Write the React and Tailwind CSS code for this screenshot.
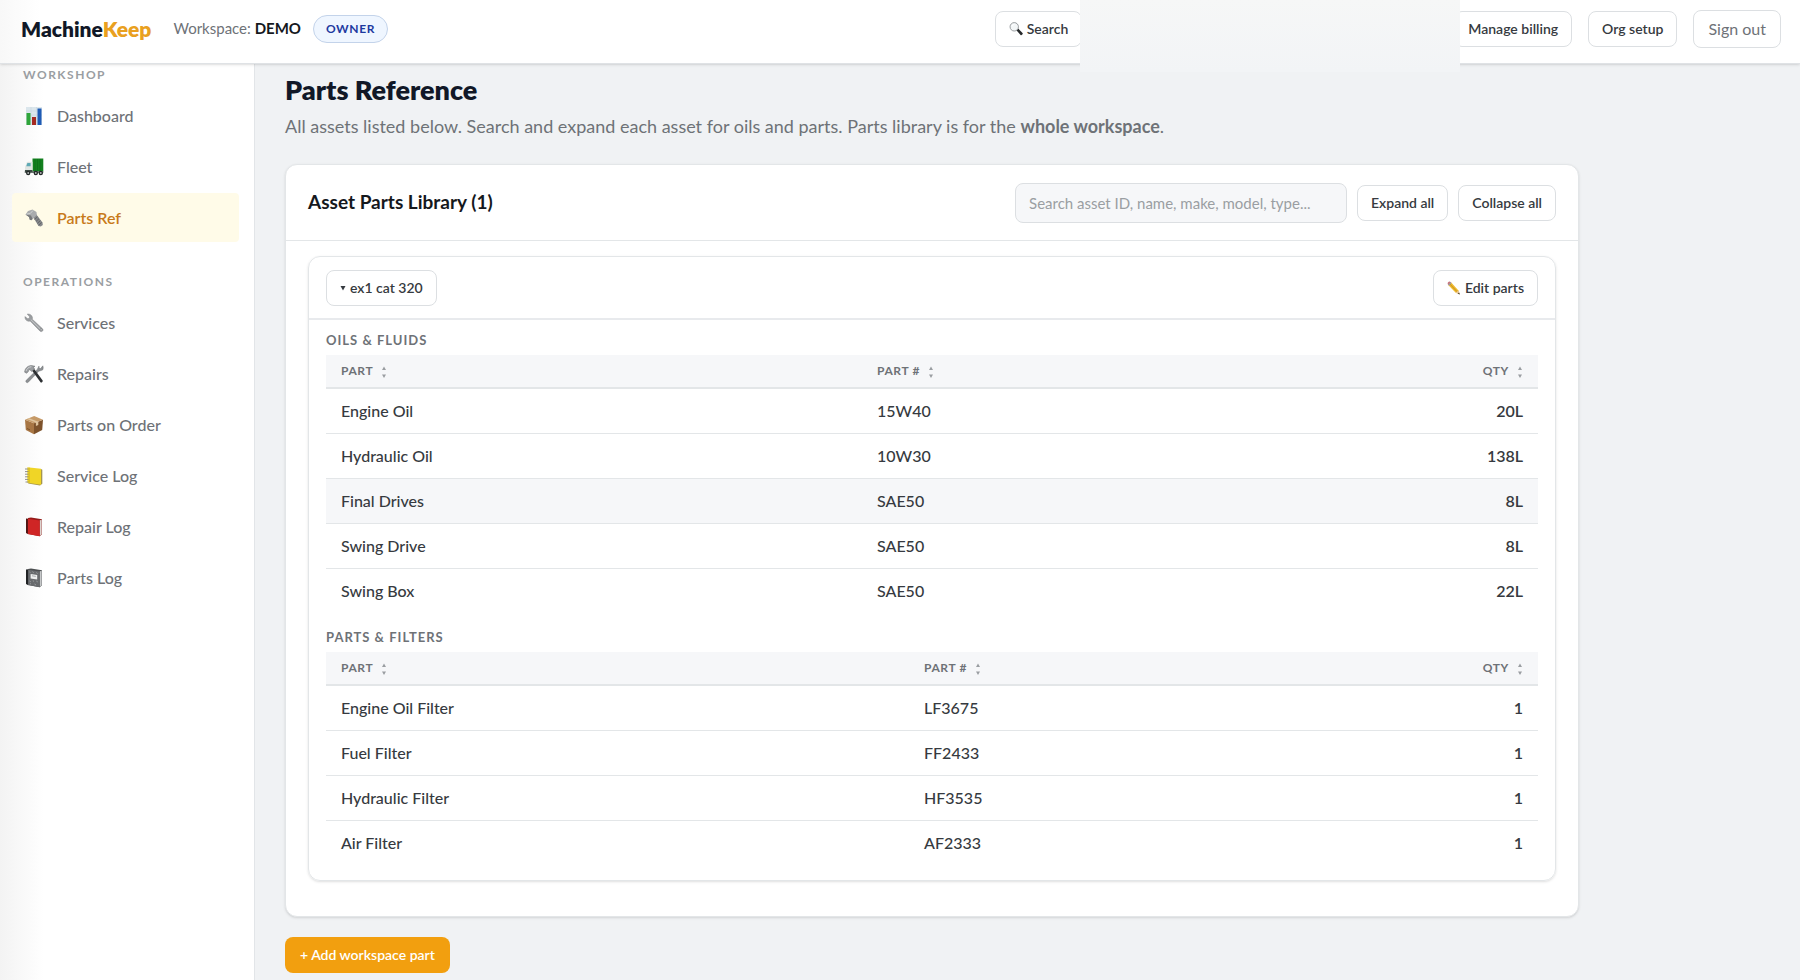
import { useState } from "react";
import { twMerge } from "tailwind-merge";

const navGroups = [
  {
    title: "Workshop",
    items: [
      { label: "Dashboard", icon: ChartIcon },
      { label: "Fleet", icon: TruckIcon },
      { label: "Parts Ref", icon: BoltIcon, active: true },
    ],
  },
  {
    title: "Operations",
    items: [
      { label: "Services", icon: WrenchIcon },
      { label: "Repairs", icon: ToolsIcon },
      { label: "Parts on Order", icon: PackageIcon },
      { label: "Service Log", icon: LedgerIcon },
      { label: "Repair Log", icon: RedBookIcon },
      { label: "Parts Log", icon: NotebookIcon },
    ],
  },
];

const oils = [
  { part: "Engine Oil", number: "15W40", qty: "20L" },
  { part: "Hydraulic Oil", number: "10W30", qty: "138L" },
  { part: "Final Drives", number: "SAE50", qty: "8L", highlighted: true },
  { part: "Swing Drive", number: "SAE50", qty: "8L" },
  { part: "Swing Box", number: "SAE50", qty: "22L" },
];

const filters = [
  { part: "Engine Oil Filter", number: "LF3675", qty: "1" },
  { part: "Fuel Filter", number: "FF2433", qty: "1" },
  { part: "Hydraulic Filter", number: "HF3535", qty: "1" },
  { part: "Air Filter", number: "AF2333", qty: "1" },
];

function ChartIcon() {
  return (
    <svg viewBox="0 0 20 20" className="size-5" aria-hidden="true">
      <rect x="2" y="1" width="16" height="18" fill="#dbe6ec" />
      <path d="M2 5h16M2 9h16M2 13h16M7 1v18M12.500 1v18" stroke="#c3d3dc" strokeWidth=".5" />
      <rect x="2.500" y="7" width="4" height="12" fill="#2fa53a" />
      <rect x="8" y="11" width="4" height="8" fill="#a52a22" />
      <rect x="13.500" y="2.500" width="4" height="16.500" fill="#1f5bb5" />
    </svg>
  );
}

function TruckIcon() {
  return (
    <svg viewBox="0 0 20 20" className="size-5" aria-hidden="true">
      <path d="M8.500 1.500h10.800v13H8.500z" fill="#13801f" />
      <path d="M11 2v12M13.500 2v12M16 2v12" stroke="#0c6a17" strokeWidth=".6" />
      <path d="M1 14.500V10l1.800-4.500 1-.8h4.700v9.800z" fill="#dfe5e2" />
      <path d="M2.200 9.300 3.400 6h3.200v3.300z" fill="#5fa9b5" />
      <path d="M1 13h7.500v1.500h10.800v1.300H.700z" fill="#3c4a43" />
      <g fill="#222827">
        <circle cx="4.200" cy="16" r="2.200" />
        <circle cx="11.800" cy="16" r="2.200" />
        <circle cx="16.800" cy="16" r="2.200" />
      </g>
      <g fill="#b5bab8">
        <circle cx="4.200" cy="16" r=".9" />
        <circle cx="11.800" cy="16" r=".9" />
        <circle cx="16.800" cy="16" r=".9" />
      </g>
    </svg>
  );
}

function BoltIcon() {
  return (
    <svg viewBox="0 0 20 20" className="size-5" aria-hidden="true">
      <path d="m9 9 3-3 6.500 8.500.3 2.500-2 1.500-2.300-.4z" fill="#85878a" />
      <path d="m10.500 11.500 3-2.700M12 13.400l3-2.700M13.400 15.300l3-2.700M14.700 17.200l3-2.700" stroke="#5a5c5e" strokeWidth=".8" />
      <path d="M1.500 6.500 4 3l4.500-1.500L12.500 4l.3 3-4 4-1.500 1.200-1.500-.5L5 9z" fill="#a9abad" />
      <path d="M1.500 6.500 5 9l.8 2.700 1.500.5L8.500 11 7 7.500z" fill="#77797b" />
      <path d="m2.500 6 3.700-.5L9 2.500" stroke="#d4d6d7" strokeWidth=".9" fill="none" />
    </svg>
  );
}

function WrenchIcon() {
  return (
    <svg viewBox="0 0 20 20" className="size-5" aria-hidden="true">
      <path
        d="M3.200 1 5.600 3.800 5.300 5.200 3.800 5.700.9 3.600C.8 6 2 7.900 4.200 8.200c.8.100 1.400 0 1.900-.2l9.700 9.900c.8.900 2 .9 2.700.2s.7-1.800-.2-2.600L8.300 6.200c.2-.7.200-1.300.1-2C8 2.100 5.700.6 3.200 1z"
        fill="#9a9da0"
        stroke="#76797c"
        strokeWidth=".4"
      />
      <path d="m6.800 6.600 9.500 9.400" stroke="#d3d5d7" strokeWidth=".8" />
      <circle cx="17.100" cy="16.800" r=".9" fill="#fff" stroke="#6d7073" strokeWidth=".6" />
    </svg>
  );
}

function ToolsIcon() {
  return (
    <svg viewBox="0 0 20 20" className="size-5" aria-hidden="true">
      <path d="M15 2 13.200 5.500 2.200 16.300c-.6.700-.5 1.500.1 2s1.400.5 2-.1L14.700 7.300 18.600 6c.8-1.300.8-2.800.2-4.200l-2.200 2.800-1.500-.6z" fill="#8d9093" stroke="#66696c" strokeWidth=".4" />
      <path d="m8 6.500 2-1.700 8.700 11.600c.4.900-1 2.500-2 2z" fill="#2d3033" />
      <path d="M.7 8.200c0-3.300 2.600-6.500 6.700-6.700L11 2.300l-1.500 1 1 1.800-2.700 2.500-1.900-1.800c-1.200 0-1.600.8-1.500 1.700L2.600 9.200z" fill="#9a9da0" stroke="#5f6265" strokeWidth=".5" />
      <path d="M2 7c.7-2.200 2.600-4 5.300-4.300" stroke="#dadcde" strokeWidth=".8" fill="none" />
    </svg>
  );
}

function PackageIcon() {
  return (
    <svg viewBox="0 0 20 20" className="size-5" aria-hidden="true">
      <path d="m1 4.800 9 3.400v11L1.800 15z" fill="#a87644" />
      <path d="m10 8.200 9-3.400L18.200 15 10 19.200z" fill="#7d522b" />
      <path d="M1 4.800 10.200 1 19 4.800l-9 3.400z" fill="#c69a68" />
      <path d="m5 3.200 9.300 3.500v3.200l-2.400 1V7.500L2.800 4z" fill="#dfc49d" />
      <path d="M3 13.500l3 1.400" stroke="#6f4723" strokeWidth=".8" />
    </svg>
  );
}

function LedgerIcon() {
  return (
    <svg viewBox="0 0 20 20" className="size-5" aria-hidden="true">
      <path d="m17 3 1.300.8v14l-2.300 1.700-12-2z" fill="#a49650" />
      <path d="M3.300 1.200 17 2.800v15.900l-13.700-2z" fill="#f0d526" />
      <path d="M5.200 1.500v15.300" stroke="#c9ad14" strokeWidth=".6" />
      <path d="M1 3h3.500M1 5.600h3.500M1 8.200h3.500M1 10.800h3.500M1 13.400h3.500M1.500 16h3" stroke="#88857a" strokeWidth=".9" />
    </svg>
  );
}

function RedBookIcon() {
  return (
    <svg viewBox="0 0 20 20" className="size-5" aria-hidden="true">
      <path d="m2 1.500 2.200.2v15.500L2 16z" fill="#4d1614" />
      <path d="m4 1 3-.5L18 2.300v15l-2.300 2L4 17z" fill="#941a18" />
      <path d="m15.700 3.500 2-1v14.800l-2 1.500z" fill="#ddd5d0" />
      <path d="m3.900 1.700 11.800 1.900v15.700L3.900 17z" fill="#cf2525" />
    </svg>
  );
}

function NotebookIcon() {
  return (
    <svg viewBox="0 0 20 20" className="size-5" aria-hidden="true">
      <path d="m2 1.500 2.300-.2v16L2 16z" fill="#202224" />
      <path d="m4 1 3-.5L18 2.300v15l-2.300 2L4 17z" fill="#4b4e50" />
      <path d="m15.700 3.500 2-1v14.800l-2 1.500z" fill="#c7c9ca" />
      <path d="m4.200 1.700 11.500 1.900v15.700L4.200 17z" fill="#686b6e" />
      <path d="m5.500 4 1 .6m2-.9 1.200.9m2.600 0 1.300 1M5.500 13l1.300.8m2-1.300 1.200 1m2.300-.5 1.500 1M6 15.500l1 .5m3.500 0 1.500 1" stroke="#a5a8aa" strokeWidth=".8" />
      <path d="m6.600 6 6.600 1.100v4.400L6.600 10.400z" fill="#eceeee" />
      <path d="m8 7.800 3.800.6" stroke="#777a7d" strokeWidth=".6" />
    </svg>
  );
}

function MagnifierIcon() {
  return (
    <svg viewBox="0 0 16 16" className="size-[14px]" aria-hidden="true">
      <path d="m8.500 9.500 2-2 5.200 5.400c.4 1-1.100 2.600-2.200 2.200z" fill="#26292b" />
      <circle cx="6" cy="5.500" r="4.800" fill="#f3f6f7" stroke="#8b8f92" strokeWidth="1" />
      <path d="M3.500 5A2.700 2.700 0 0 1 6 2.700" stroke="#fff" fill="none" />
    </svg>
  );
}

function PencilIcon() {
  return (
    <svg viewBox="0 0 16 16" className="size-[14px]" aria-hidden="true">
      <path d="m4.800 1.800 8.300 9 1.400 4.300-4.500-1.600L1.700 4.900z" fill="#eeb92d" />
      <path d="m3.200 3.400 8.500 9" stroke="#b57e15" strokeWidth=".8" />
      <path d="m13.100 10.800 1.400 4.300-4.500-1.600z" fill="#e8c9a0" />
      <path d="m13.800 13.100.9 2.200-2.300-.8z" fill="#3a332b" />
      <path d="M.8 3.500C.3 2 2.200.2 3.600.8l1.200 1L1.700 4.900z" fill="#c9727c" />
      <path d="m1.200 4.300 2.900-3 1.100 1.100-2.900 3z" fill="#9a9da0" />
    </svg>
  );
}

function Button({ className, children, ...props }) {
  return (
    <button
      type="button"
      className={twMerge(
        "flex h-9 shrink-0 items-center whitespace-nowrap rounded-lg border border-[#dcdfe2] bg-white px-[13px] text-sm font-semibold text-[#363a40]",
        className
      )}
      {...props}
    >
      {children}
    </button>
  );
}

function SortMark() {
  return (
    <svg viewBox="0 0 6 12" className="mt-[2px] h-3 w-[6px]" aria-hidden="true">
      <path d="M3 .5 5 4H1zM3 12 5 8.500H1z" fill="#9a9ea2" />
    </svg>
  );
}

function HeaderCell({ label, className, right }) {
  return (
    <th scope="col" className={twMerge("px-[15px] py-0", className)}>
      <button
        type="button"
        className={twMerge(
          "flex h-8 items-center gap-2 text-xs font-bold tracking-wider text-[#6e7277] uppercase",
          right && "ml-auto"
        )}
      >
        {label}
        <SortMark />
      </button>
    </th>
  );
}

function PartsTable({ title, rows, firstColumn }) {
  return (
    <section>
      <h3 className="pt-[10px] pb-[5px] text-[13px] leading-5 font-bold tracking-[1px] text-[#6e7277] uppercase">{title}</h3>
      <table className="w-full table-fixed border-collapse text-left text-base text-[#363a40]">
        <thead>
          <tr className="border-b-2 border-[#e3e6e8] bg-[#f6f7f9]">
            <HeaderCell label="Part" className={firstColumn} />
            <HeaderCell label="Part #" />
            <HeaderCell label="Qty" className="w-[200px]" right />
          </tr>
        </thead>
        <tbody>
          {rows.map((row) => (
            <tr
              key={row.part}
              className={twMerge("h-[45px] border-b border-[#e3e6e8] last:border-b-0", row.highlighted && "bg-[#f6f7f9]")}
            >
              <td className="px-[15px] font-medium">{row.part}</td>
              <td className="px-[15px] font-medium">{row.number}</td>
              <td className="px-[15px] text-right font-semibold tabular-nums">{row.qty}</td>
            </tr>
          ))}
        </tbody>
      </table>
    </section>
  );
}

function TopBar() {
  return (
    <header className="relative z-10 flex h-16 items-center border-b border-[#dfe2e5] bg-linear-to-r from-[#f8f8f8] to-white to-[40px] pr-[19px] pb-[6px] pl-[21px] shadow-sm">
      <a href="#home" className="text-[21px] font-extrabold text-[#111827]">
        Machine<span className="text-[#e9a020]">Keep</span>
      </a>
      <p className="ml-[22px] text-[15px] text-[#6e7277]">
        Workspace: <strong className="font-bold text-[#15181d]">DEMO</strong>
      </p>
      <span className="ml-3 rounded-full border border-[#c3d3ea] bg-[#eff6ff] px-3 text-xs leading-[26px] font-bold tracking-wider text-[#1e3a9f]">
        OWNER
      </span>
      <div className="ml-auto flex items-center gap-4">
        <Button className="gap-1">
          <MagnifierIcon />
          Search
        </Button>
        <div className="w-[340px]" />
        <Button>Manage billing</Button>
        <Button>Org setup</Button>
        <Button className="h-[38px] px-[14px] text-base font-normal text-[#6e7277]">Sign out</Button>
      </div>
      <div className="absolute top-0 right-[340px] h-[72px] w-[380px] bg-linear-to-b from-[#f6f7f7] to-[#f2f4f6]" />
    </header>
  );
}

function Sidebar() {
  return (
    <aside className="w-[255px] shrink-0 border-r border-[#e2e5e8] bg-linear-to-r from-[#f3f3f3] to-white to-[44px] pt-px pr-[15px] pl-3">
      {navGroups.map((group) => (
        <nav key={group.title} aria-label={group.title} className="mb-[30px]">
          <h2 className="pl-[11px] text-xs leading-5 font-bold tracking-[1.500px] text-[#9a9ea2] uppercase">{group.title}</h2>
          <ul className="mt-[6px] flex flex-col gap-[2px]">
            {group.items.map((item) => (
              <li key={item.label}>
                <a
                  href="#"
                  className={twMerge(
                    "flex h-[49px] items-center gap-[13px] rounded-sm pl-3 text-base font-medium text-[#6e7277]",
                    item.active && "bg-[#fffbe8] font-semibold text-[#c87a1a]"
                  )}
                >
                  <item.icon />
                  {item.label}
                </a>
              </li>
            ))}
          </ul>
        </nav>
      ))}
    </aside>
  );
}

export default function App() {
  const [query, setQuery] = useState("");

  return (
    <div className="flex min-h-screen flex-col bg-[#f0f2f4] font-['Lato',sans-serif]">
      <TopBar />
      <div className="flex flex-1">
        <Sidebar />
        <main className="flex-1 pl-[30px]">
          <h1 className="pt-[10px] text-[27px] leading-8 font-extrabold text-[#111827]">Parts Reference</h1>
          <p className="mt-2 text-lg leading-6 text-[#6e7277]">
            All assets listed below. Search and expand each asset for oils and parts. Parts library is for the{" "}
            <strong className="font-bold">whole workspace</strong>.
          </p>

          <div className="mt-[26px] max-w-[1294px] rounded-xl border border-[#e3e6e8] bg-white pb-[35px] shadow-sm">
            <div className="flex h-[76px] items-center gap-[10px] border-b border-[#e3e6e8] px-[22px]">
              <h2 className="mr-auto text-[19px] font-bold text-[#15181d]">Asset Parts Library (1)</h2>
              <input
                type="search"
                aria-label="Search assets"
                value={query}
                onChange={(e) => setQuery(e.target.value)}
                placeholder="Search asset ID, name, make, model, type..."
                className="h-10 w-[332px] rounded-lg border border-[#dcdfe2] bg-[#f6f7f9] px-[13px] text-[15px] text-[#363a40] placeholder:text-[#9a9ea2]"
              />
              <Button>Expand all</Button>
              <Button>Collapse all</Button>
            </div>

            <article className="mx-[22px] mt-[15px] rounded-xl border border-[#e3e6e8] pb-[15px] shadow-sm">
              <div className="flex h-[63px] items-center justify-between border-b-2 border-[#e8eaed] px-[17px]">
                <Button className="gap-1" aria-expanded="true">
                  <svg viewBox="0 0 6 6" className="size-[6px]" aria-hidden="true">
                    <path d="M.500 1h5L3 5.500z" fill="#363a40" />
                  </svg>
                  ex1 cat 320
                </Button>
                <Button className="gap-1">
                  <PencilIcon />
                  Edit parts
                </Button>
              </div>
              <div className="flex flex-col gap-1 px-[17px]">
                <PartsTable title="Oils & Fluids" rows={oils} firstColumn="w-[536px]" />
                <PartsTable title="Parts & Filters" rows={filters} firstColumn="w-[583px]" />
              </div>
            </article>
          </div>

          <button type="button" className="mt-5 h-9 rounded-lg bg-[#f29f0f] px-[15px] text-sm font-semibold text-white">
            + Add workspace part
          </button>
        </main>
      </div>
    </div>
  );
}
